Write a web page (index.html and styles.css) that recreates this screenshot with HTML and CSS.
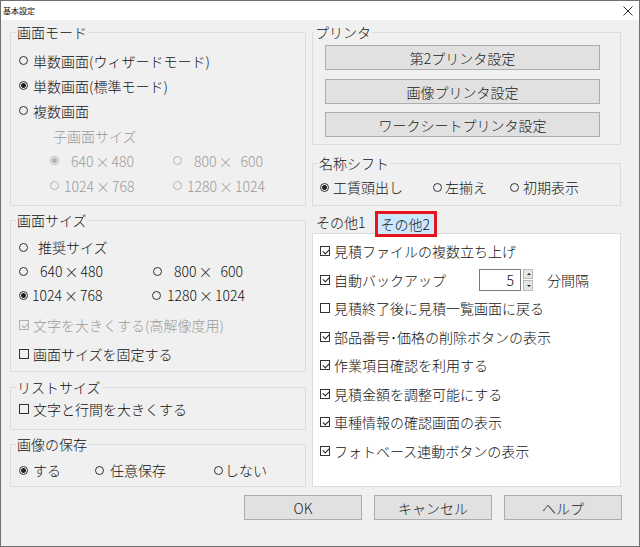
FILE: index.html
```html
<!DOCTYPE html>
<html lang="ja">
<head>
<meta charset="utf-8">
<title>基本設定</title>
<link rel="stylesheet" href="styles.css">
</head>
<body>
<div class="window">
  <div class="titlebar">
    <span class="title">基本設定</span>
    <svg class="close" width="10" height="10" viewBox="0 0 10 10"><path d="M0.5 0.5 L9.5 9.5 M9.5 0.5 L0.5 9.5" stroke="#333" stroke-width="1" fill="none"/></svg>
  </div>
  <div class="body">
    <div class="cols">
      <div class="col left">
        <div class="group g-mode">
          <div class="legend">画面モード</div>
          <div class="content">
            <div class="row r25"><span class="radio"></span><span class="lbl g5">単数画面(ウィザードモード)</span></div>
            <div class="row r25"><span class="radio on"></span><span class="lbl g5">単数画面(標準モード)</span></div>
            <div class="row r25"><span class="radio"></span><span class="lbl g5">複数画面</span></div>
            <div class="row r25 sub-label dis">子画面サイズ</div>
            <div class="row r25 sub dis">
              <span class="opt o-sub1"><span class="radio on dis"></span><span class="lbl g12">640<span class="x">×</span>480</span></span>
              <span class="opt"><span class="radio dis"></span><span class="lbl g12">800<span class="x">×</span><span class="fs"></span>600</span></span>
            </div>
            <div class="row r25 sub dis">
              <span class="opt o-sub1"><span class="radio dis"></span><span class="lbl g5">1024<span class="x">×</span>768</span></span>
              <span class="opt"><span class="radio dis"></span><span class="lbl g5">1280<span class="x">×</span>1024</span></span>
            </div>
          </div>
        </div>

        <div class="group g-size">
          <div class="legend">画面サイズ</div>
          <div class="content">
            <div class="row"><span class="radio"></span><span class="lbl g10">推奨サイズ</span></div>
            <div class="row">
              <span class="opt o-size1"><span class="radio"></span><span class="lbl g12">640<span class="x">×</span>480</span></span>
              <span class="opt"><span class="radio"></span><span class="lbl g12">800<span class="x">×</span><span class="fs"></span>600</span></span>
            </div>
            <div class="row">
              <span class="opt o-size1"><span class="radio on"></span><span class="lbl g4">1024<span class="x">×</span>768</span></span>
              <span class="opt o-size2"><span class="radio"></span><span class="lbl g6">1280<span class="x">×</span>1024</span></span>
            </div>
            <div class="row m6 dis"><span class="check on dis"></span><span class="lbl g4">文字を大きくする(高解像度用)</span></div>
            <div class="row m5"><span class="check"></span><span class="lbl g4">画面サイズを固定する</span></div>
          </div>
        </div>

        <div class="group g-list">
          <div class="legend">リストサイズ</div>
          <div class="content">
            <div class="row"><span class="check"></span><span class="lbl g4">文字と行間を大きくする</span></div>
          </div>
        </div>

        <div class="group g-save">
          <div class="legend">画像の保存</div>
          <div class="content">
            <div class="row">
              <span class="opt o-save1"><span class="radio on"></span><span class="lbl g5">する</span></span>
              <span class="opt o-save2"><span class="radio"></span><span class="lbl g6">任意保存</span></span>
              <span class="opt"><span class="radio"></span><span class="lbl g2">しない</span></span>
            </div>
          </div>
        </div>
      </div>

      <div class="col right">
        <div class="group g-printer">
          <div class="legend">プリンタ</div>
          <div class="content">
            <div class="btn pbtn">第2プリンタ設定</div>
            <div class="btn pbtn">画像プリンタ設定</div>
            <div class="btn pbtn">ワークシートプリンタ設定</div>
          </div>
        </div>

        <div class="group g-shift">
          <div class="legend">名称シフト</div>
          <div class="content">
            <div class="row">
              <span class="opt o-shift1"><span class="radio on"></span><span class="lbl g4">工賃頭出し</span></span>
              <span class="opt o-shift2"><span class="radio"></span><span class="lbl g3">左揃え</span></span>
              <span class="opt"><span class="radio"></span><span class="lbl g4">初期表示</span></span>
            </div>
          </div>
        </div>

        <div class="tabs">
          <span class="tab">その他1</span>
          <span class="tab active">その他2</span>
        </div>
        <div class="panel">
          <div class="prow"><span class="check on"></span><span class="lbl g4">見積ファイルの複数立ち上げ</span></div>
          <div class="prow">
            <span class="check on"></span><span class="lbl g4 w-backup">自動バックアップ</span>
            <span class="spin-input">5</span>
            <span class="spin-btns"><span class="spin-b up"></span><span class="spin-b down"></span></span>
            <span class="unit">分間隔</span>
          </div>
          <div class="prow"><span class="check"></span><span class="lbl g4">見積終了後に見積一覧画面に戻る</span></div>
          <div class="prow"><span class="check on"></span><span class="lbl g4">部品番号･価格の削除ボタンの表示</span></div>
          <div class="prow"><span class="check on"></span><span class="lbl g4">作業項目確認を利用する</span></div>
          <div class="prow"><span class="check on"></span><span class="lbl g4">見積金額を調整可能にする</span></div>
          <div class="prow"><span class="check on"></span><span class="lbl g4">車種情報の確認画面の表示</span></div>
          <div class="prow"><span class="check on"></span><span class="lbl g4">フォトベース連動ボタンの表示</span></div>
        </div>
      </div>
    </div>
    <div class="footer">
      <div class="btn fbtn">OK</div>
      <div class="btn fbtn">キャンセル</div>
      <div class="btn fbtn">ヘルプ</div>
    </div>
  </div>
</div>
</body>
</html>
```

FILE: styles.css
```css
* { box-sizing: border-box; }
html, body { margin: 0; padding: 0; }
body {
  width: 640px;
  height: 547px;
  background: #fff;
  font-family: "Noto Sans CJK JP", "Noto Sans", sans-serif;
  font-weight: 300;
  font-size: 14px;
  color: #111;
  overflow: hidden;
}
.window {
  width: 640px;
  height: 547px;
  border: 1px solid #707070;
  background: #f0f0f0;
  display: flex;
  flex-direction: column;
}
.titlebar {
  flex: none;
  height: 19px;
  background: #fff;
  display: flex;
  align-items: center;
  justify-content: space-between;
  padding: 0 6px 0 2px;
}
.title { font-size: 8px; line-height: 10px; color: #111; font-weight: 400; }
.close { display: block; }

.body {
  flex: 1;
  padding: 3px 17px 0 9px;
  display: flex;
  flex-direction: column;
}
.cols { flex: none; display: flex; gap: 6px; }
.col { display: flex; flex-direction: column; }
.left { width: 296px; }
.right { width: 309px; }

.group {
  flex: none;
  display: flex;
  flex-direction: column;
  border: 1px solid #dcdcdc;
}
.legend {
  align-self: flex-start;
  margin: -10px 0 0 5px;
  padding: 0 1px;
  height: 18px;
  line-height: 18px;
  background: #f0f0f0;
  white-space: nowrap;
}
.content { display: flex; flex-direction: column; }

.row { flex: none; display: flex; align-items: center; height: 24px; white-space: nowrap; }
.r25 { height: 25px; }
.m5 { margin-top: 5px; }
.m6 { margin-top: 6px; }
.opt { display: flex; align-items: center; }
.lbl { line-height: 18px; }
.g2 { margin-left: 2px; }
.g3 { margin-left: 3px; }
.g4 { margin-left: 4px; }
.g5 { margin-left: 5px; }
.g6 { margin-left: 6px; }
.g10 { margin-left: 10px; }
.g12 { margin-left: 12px; }
.x { margin: 0 2px; }
.fs { display: inline-block; width: 6px; }
.dis { color: #9a9a9a; }

.radio {
  flex: none;
  display: inline-block;
  width: 9px;
  height: 9px;
  border: 1px solid #333;
  border-radius: 50%;
  background: transparent;
}
.radio.on { background: radial-gradient(circle, #222 0 2.1px, transparent 2.7px); }
.radio.dis { border-color: #b5b5b5; }
.radio.on.dis { background: radial-gradient(circle, #b0b0b0 0 2.1px, transparent 2.7px); }

.check {
  flex: none;
  position: relative;
  display: inline-block;
  width: 10px;
  height: 10px;
  border: 1px solid #333;
}
.check.on::after {
  content: "";
  position: absolute;
  left: 2.5px;
  top: 0.5px;
  width: 3px;
  height: 5px;
  border: solid #222;
  border-width: 0 1px 1px 0;
  transform: rotate(45deg);
}
.check.dis { border-color: #b0b0b0; }
.check.dis::after { border-color: #b0b0b0; }

/* 画面モード */
.g-mode { margin-top: 9px; }
.g-mode .content { padding: 7px 0 7px 8px; }
.sub-label { padding-left: 34px; }
.sub { padding-left: 31px; }
.o-sub1 { width: 123px; }

/* 画面サイズ */
.g-size { margin-top: 14px; }
.g-size .content { padding: 6px 0 5px 8px; }
.o-size1 { width: 134px; }
.o-size2 { margin-left: -1px; }

/* リストサイズ */
.g-list { margin-top: 15px; }
.g-list .content { padding: 1px 0 8px 8px; }

/* 画像の保存 */
.g-save { margin-top: 14px; }
.g-save .content { padding: 5px 0 4px 8px; }
.o-save1 { width: 76px; }
.o-save2 { width: 119px; }

/* プリンタ */
.g-printer { margin-top: 9px; }
.g-printer .legend { margin-left: 1px; }
.g-printer .content { padding: 4px 0 7px 12px; }
.btn {
  flex: none;
  display: flex;
  align-items: center;
  justify-content: center;
  height: 25px;
  background: #e1e1e1;
  border: 1px solid #adadad;
  color: #222;
  font-size: 14px;
  white-space: nowrap;
}
.pbtn { width: 275px; }
.pbtn + .pbtn { margin-top: 9px; }
.pbtn + .pbtn + .pbtn { margin-top: 8px; }

/* 名称シフト */
.g-shift { margin-top: 18px; }
.g-shift .content { padding: 3px 0 6px 7px; }
.o-shift1 { width: 113px; }
.o-shift2 { width: 77px; }

/* tabs */
.tabs {
  flex: none;
  margin-top: 5px;
  height: 22px;
  display: flex;
  align-items: flex-start;
  padding-left: 4px;
}
.tab { line-height: 22px; white-space: nowrap; }
.tab.active {
  position: relative;
  z-index: 1;
  margin-left: 9px;
  height: 26px;
  line-height: 20px;
  padding: 0 4px 0 3px;
  border: 3px solid #e8141c;
  background: #cce8ff;
}
.panel {
  flex: 1;
  background: #fff;
  border: 1px solid #dcdcdc;
  padding: 3px 0 0 7px;
}
.prow {
  display: flex;
  align-items: center;
  height: 28.5px;
  white-space: nowrap;
}
.w-backup { width: 145px; }
.spin-input {
  width: 42px;
  height: 22px;
  border: 1px solid #7a7a7a;
  background: #fff;
  text-align: right;
  padding-right: 6px;
  line-height: 20px;
}
.spin-btns {
  margin-left: 2px;
  width: 10px;
  height: 22px;
  display: flex;
  flex-direction: column;
  gap: 1px;
}
.spin-b {
  position: relative;
  flex: 1;
  background: #e6e6e6;
  border: 1px solid #b9b9b9;
}
.spin-b::after {
  content: "";
  position: absolute;
  left: 2.5px;
  top: 3.5px;
  border-left: 2px solid transparent;
  border-right: 2px solid transparent;
}
.spin-b.up::after { border-bottom: 2px solid #222; }
.spin-b.down::after { border-top: 2px solid #222; }
.unit { margin-left: 14px; }

.footer {
  flex: none;
  display: flex;
  justify-content: flex-end;
  gap: 12px;
  padding-top: 8px;
}
.fbtn { width: 118px; }
```
